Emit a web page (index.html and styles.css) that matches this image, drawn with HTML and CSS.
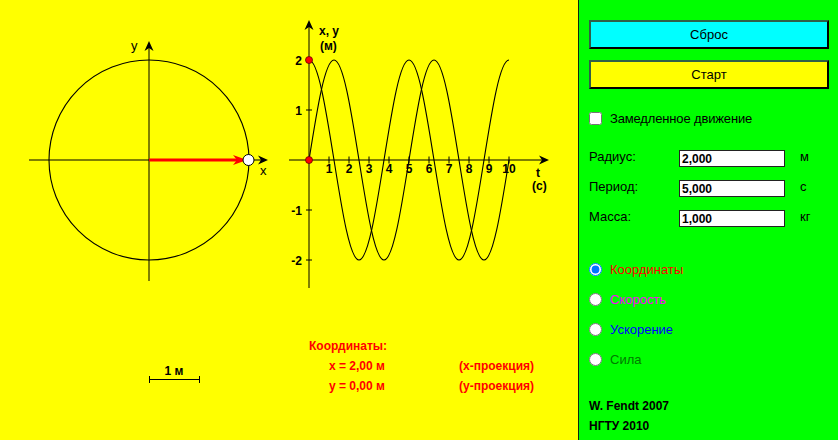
FILE: index.html
```html
<!DOCTYPE html>
<html lang="ru">
<head>
<meta charset="utf-8">
<title>Движение по окружности</title>
<link rel="stylesheet" href="styles.css">
</head>
<body>
<div class="app">
  <div class="stage">
    <svg class="canvas" width="578" height="440" viewBox="0 0 578 440">
      <!-- circle view -->
      <circle cx="149" cy="160" r="100" fill="none" stroke="#000" stroke-width="1.1"/>
      <line x1="29" y1="160" x2="263" y2="160" stroke="#000"/>
      <path d="M268,160 L258,155.5 L261,160 L258,164.5 Z" fill="#000"/>
      <line x1="149" y1="281" x2="149" y2="46" stroke="#000"/>
      <path d="M149,41 L144.5,51 L149,48 L153.5,51 Z" fill="#000"/>
      <text class="lbl" x="131" y="50">y</text>
      <text class="lbl" x="260" y="175">x</text>
      <line x1="149" y1="160" x2="238" y2="160" stroke="#ff0000" stroke-width="3"/>
      <path d="M247,160 L233,155 L237,160 L233,165 Z" fill="#ff0000"/>
      <circle cx="248.5" cy="160" r="5.5" fill="#fff" stroke="#000" stroke-width="1"/>

      <!-- scale bar -->
      <text class="bold" x="174" y="375" text-anchor="middle">1 м</text>
      <line x1="149" y1="379.5" x2="199" y2="379.5" stroke="#000"/>
      <line x1="149.5" y1="376" x2="149.5" y2="383" stroke="#000"/>
      <line x1="199.5" y1="376" x2="199.5" y2="383" stroke="#000"/>

      <!-- graph -->
      <line x1="309" y1="288" x2="309" y2="25" stroke="#000"/>
      <path d="M309,20 L304.5,30 L309,27 L313.5,30 Z" fill="#000"/>
      <line x1="289" y1="160" x2="544" y2="160" stroke="#000"/>
      <path d="M549,160 L539,155.5 L542,160 L539,164.5 Z" fill="#000"/>
      <g stroke="#000">
        <line x1="329" y1="156.5" x2="329" y2="163.5"/>
        <line x1="349" y1="156.5" x2="349" y2="163.5"/>
        <line x1="369" y1="156.5" x2="369" y2="163.5"/>
        <line x1="389" y1="156.5" x2="389" y2="163.5"/>
        <line x1="409" y1="156.5" x2="409" y2="163.5"/>
        <line x1="429" y1="156.5" x2="429" y2="163.5"/>
        <line x1="449" y1="156.5" x2="449" y2="163.5"/>
        <line x1="469" y1="156.5" x2="469" y2="163.5"/>
        <line x1="489" y1="156.5" x2="489" y2="163.5"/>
        <line x1="509" y1="156.5" x2="509" y2="163.5"/>
        <line x1="306" y1="60" x2="312" y2="60"/>
        <line x1="306" y1="110" x2="312" y2="110"/>
        <line x1="306" y1="210" x2="312" y2="210"/>
        <line x1="306" y1="260" x2="312" y2="260"/>
      </g>
      <g class="tick" text-anchor="middle">
        <text x="329" y="173">1</text>
        <text x="349" y="173">2</text>
        <text x="369" y="173">3</text>
        <text x="389" y="173">4</text>
        <text x="409" y="173">5</text>
        <text x="429" y="173">6</text>
        <text x="449" y="173">7</text>
        <text x="469" y="173">8</text>
        <text x="489" y="173">9</text>
        <text x="509" y="173">10</text>
      </g>
      <g class="tick" text-anchor="end">
        <text x="302" y="64.5">2</text>
        <text x="302" y="114.5">1</text>
        <text x="302" y="214.5">-1</text>
        <text x="302" y="264.5">-2</text>
      </g>
      <text class="tick" x="319" y="35">x, y</text>
      <text class="tick" x="320" y="50">(м)</text>
      <text class="tick" x="536" y="177">t</text>
      <text class="tick" x="532" y="190">(с)</text>

      <!-- y = 2 sin -->
      <path fill="none" stroke="#000" stroke-width="1.1"
        d="M309,160 C317.153,108.77 324.953,60 334,60 C343.047,60 350.847,108.77 359,160 C367.153,211.23 374.953,260 384,260 C393.047,260 400.847,211.23 409,160 C417.153,108.77 424.953,60 434,60 C443.047,60 450.847,108.77 459,160 C467.153,211.23 474.953,260 484,260 C493.047,260 500.847,211.23 509,160"/>
      <!-- x = 2 cos -->
      <path fill="none" stroke="#000" stroke-width="1.1"
        d="M309,60 C318.047,60 325.847,108.77 334,160 C342.153,211.23 349.953,260 359,260 C368.047,260 375.847,211.23 384,160 C392.153,108.77 399.953,60 409,60 C418.047,60 425.847,108.77 434,160 C442.153,211.23 449.953,260 459,260 C468.047,260 475.847,211.23 484,160 C492.153,108.77 499.953,60 509,60"/>
      <circle cx="309" cy="60" r="3.5" fill="#ff0000" stroke="#6a0000" stroke-width="0.8"/>
      <circle cx="309" cy="160" r="3.5" fill="#ff0000" stroke="#6a0000" stroke-width="0.8"/>

      <!-- readout -->
      <g class="readout">
        <text x="309" y="350">Координаты:</text>
        <text x="329" y="370">x = 2,00 м</text>
        <text x="459" y="370">(x-проекция)</text>
        <text x="329" y="390">y = 0,00 м</text>
        <text x="459" y="390">(y-проекция)</text>
      </g>
    </svg>
  </div>
  <div class="panel">
    <button class="btn btn-reset" type="button">Сброс</button>
    <button class="btn btn-start" type="button">Старт</button>
    <label class="check-row"><input class="box" type="checkbox"><span>Замедленное движение</span></label>
    <div class="fields">
      <div class="field"><span class="flabel">Радиус:</span><input class="finput" type="text" value="2,000"><span class="unit">м</span></div>
      <div class="field"><span class="flabel">Период:</span><input class="finput" type="text" value="5,000"><span class="unit">с</span></div>
      <div class="field"><span class="flabel">Масса:</span><input class="finput" type="text" value="1,000"><span class="unit">кг</span></div>
    </div>
    <div class="radios">
      <label class="radio-row"><input class="box" type="radio" name="mode" checked><span class="c-coord">Координаты</span></label>
      <label class="radio-row"><input class="box" type="radio" name="mode"><span class="c-vel">Скорость</span></label>
      <label class="radio-row"><input class="box" type="radio" name="mode"><span class="c-acc">Ускорение</span></label>
      <label class="radio-row"><input class="box" type="radio" name="mode"><span class="c-force">Сила</span></label>
    </div>
    <div class="footer">
      <div>W. Fendt 2007</div>
      <div>НГТУ 2010</div>
    </div>
  </div>
</div>
</body>
</html>
```

FILE: styles.css
```css
html, body {
  margin: 0;
  padding: 0;
}
body {
  font-family: "Liberation Sans", Arial, sans-serif;
  width: 838px;
  height: 440px;
  overflow: hidden;
}
.app {
  display: flex;
  width: 838px;
  height: 440px;
}
.stage {
  width: 578px;
  height: 440px;
  background: #ffff00;
  flex: none;
}
.canvas {
  display: block;
}
.canvas text {
  font-family: "Liberation Sans", Arial, sans-serif;
}
.lbl {
  font-size: 13px;
  fill: #000;
}
.tick {
  font-size: 12px;
  font-weight: bold;
  fill: #000;
}
.bold {
  font-size: 12px;
  font-weight: bold;
  fill: #000;
}
.readout text {
  font-size: 12px;
  font-weight: bold;
  fill: #ff0000;
}

.panel {
  width: 260px;
  height: 440px;
  flex: none;
  background: #00ff00;
  border-left: 1px solid #0a2a0a;
  padding: 20px 0 0 10px;
  box-sizing: border-box;
  display: flex;
  flex-direction: column;
  align-items: flex-start;
  font-size: 13px;
  color: #000;
}
.btn {
  width: 240px;
  height: 29px;
  margin: 0;
  padding: 0;
  border: 2px solid;
  border-color: #2f5f47 #000 #000 #2f5f47;
  font-family: "Liberation Sans", Arial, sans-serif;
  font-size: 13px;
  color: #000;
  border-radius: 0;
}
.btn-reset {
  background: #00ffff;
}
.btn-start {
  background: #ffff00;
  margin-top: 11px;
}
.check-row {
  display: flex;
  align-items: center;
  height: 13px;
  margin-top: 23px;
  letter-spacing: -0.15px;
}
.box {
  width: 13px;
  height: 13px;
  margin: 0 8px 0 0;
  flex: none;
}
.fields {
  display: flex;
  flex-direction: column;
  gap: 13px;
  margin-top: 25px;
}
.field {
  display: flex;
  align-items: flex-start;
  height: 17px;
}
.flabel {
  width: 90px;
  line-height: 14px;
}
.finput {
  width: 106px;
  height: 17px;
  box-sizing: border-box;
  margin: 0;
  padding: 0 2px;
  border: 1px solid #222;
  background: #fff;
  font-family: "Liberation Sans", Arial, sans-serif;
  font-size: 12px;
  font-weight: bold;
  color: #000;
  outline: none;
}
.unit {
  margin-left: 15px;
  line-height: 14px;
}
.radios {
  display: flex;
  flex-direction: column;
  gap: 17px;
  margin-top: 36px;
}
.radio-row {
  display: flex;
  align-items: center;
  height: 13px;
}
.c-coord { color: #ff0000; }
.c-vel { color: #ff00ff; }
.c-acc { color: #0000ff; }
.c-force { color: #007a00; }
.footer {
  margin-top: 30px;
  font-size: 12px;
  font-weight: bold;
  line-height: 20px;
}
```
